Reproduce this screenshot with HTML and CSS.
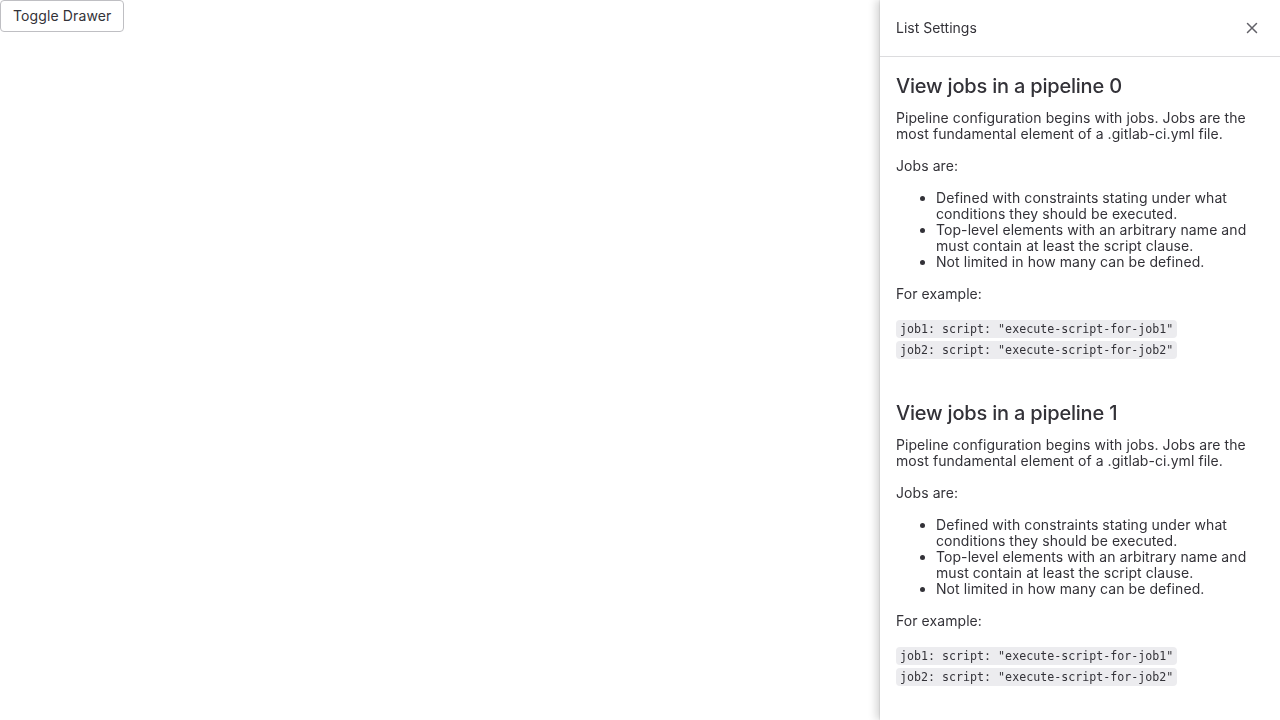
FILE: index.html
```html
<!DOCTYPE html>
<html lang="en">
<head>
<meta charset="utf-8">
<title>Drawer</title>
<link rel="stylesheet" href="styles.css">
</head>
<body>
<button class="toggle-btn" type="button">Toggle Drawer</button>

<aside class="drawer">
  <header class="drawer-header">
    <span class="drawer-title">List Settings</span>
    <button class="close-btn" type="button" aria-label="Close">
      <svg width="16" height="16" viewBox="0 0 16 16"><path d="M3.5 3.5l9 9M12.5 3.5l-9 9" stroke="#626168" stroke-width="1.5" stroke-linecap="round" fill="none"/></svg>
    </button>
  </header>
  <div class="drawer-body">
    <section class="doc">
      <h2>View jobs in a pipeline 0</h2>
      <p>Pipeline configuration begins with jobs. Jobs are the most fundamental element of a .gitlab-ci.yml file.</p>
      <p>Jobs are:</p>
      <ul>
        <li>Defined with constraints stating under what conditions they should be executed.</li>
        <li>Top-level elements with an arbitrary name and must contain at least the script clause.</li>
        <li>Not limited in how many can be defined.</li>
      </ul>
      <p>For example:</p>
      <div class="code-lines">
        <code>job1: script: "execute-script-for-job1"</code>
        <code>job2: script: "execute-script-for-job2"</code>
      </div>
    </section>
    <section class="doc">
      <h2>View jobs in a pipeline 1</h2>
      <p>Pipeline configuration begins with jobs. Jobs are the most fundamental element of a .gitlab-ci.yml file.</p>
      <p>Jobs are:</p>
      <ul>
        <li>Defined with constraints stating under what conditions they should be executed.</li>
        <li>Top-level elements with an arbitrary name and must contain at least the script clause.</li>
        <li>Not limited in how many can be defined.</li>
      </ul>
      <p>For example:</p>
      <div class="code-lines">
        <code>job1: script: "execute-script-for-job1"</code>
        <code>job2: script: "execute-script-for-job2"</code>
      </div>
    </section>
  </div>
</aside>
</body>
</html>
```

FILE: styles.css
```css
html, body {
  margin: 0;
  padding: 0;
  height: 100%;
  overflow: hidden;
}
body {
  font-family: Inter, "Noto Sans", "Liberation Sans", sans-serif;
  font-size: 14px;
  color: #333238;
  background: #fff;
}
.toggle-btn {
  font-family: inherit;
  font-size: 14px;
  letter-spacing: 0.12px;
  color: #333238;
  background: #fff;
  border: 1px solid #bfbfc3;
  border-radius: 4px;
  height: 32px;
  padding: 0 12px 1px;
  margin: 0;
  display: block;
}
.drawer {
  position: fixed;
  top: 0;
  right: 0;
  width: 400px;
  height: 720px;
  background: #fff;
  box-shadow: 0 0 2px rgba(5,5,6,0.2), -4px 0 8px rgba(5,5,6,0.16);
  display: flex;
  flex-direction: column;
  overflow: hidden;
}
.drawer-header {
  height: 57px;
  box-sizing: border-box;
  border-bottom: 1px solid #dcdcde;
  display: flex;
  align-items: center;
  justify-content: space-between;
  padding: 0 16px 0 16px;
  flex-shrink: 0;
}
.drawer-title {
  font-size: 14px;
  line-height: 20px;
}
.close-btn {
  width: 24px;
  height: 24px;
  border: 0;
  background: transparent;
  padding: 0;
  display: flex;
  align-items: center;
  justify-content: center;
}
.drawer-body {
  padding: 17px 16px 0;
  letter-spacing: 0.07px;
}
.doc {
  padding-bottom: 42px;
}
.doc h2 {
  font-size: 20px;
  font-weight: 500;
  line-height: 24px;
  margin: 0 0 12px;
  letter-spacing: -0.2px;
  color: #333238;
}
.doc p {
  margin: 0 0 16px;
  line-height: 16px;
}
.doc ul {
  margin: 0 0 16px;
  padding-left: 40px;
  line-height: 16px;
}
.code-lines {
  display: flex;
  flex-direction: column;
  align-items: flex-start;
  gap: 3px;
  padding-top: 2px;
}
.code-lines code {
  font-family: "DejaVu Sans Mono", "Liberation Mono", monospace;
  font-size: 11.65px;
  letter-spacing: 0;
  line-height: 18px;
  background: #ececef;
  border-radius: 4px;
  padding: 0 4px;
  color: #333238;
}
```
